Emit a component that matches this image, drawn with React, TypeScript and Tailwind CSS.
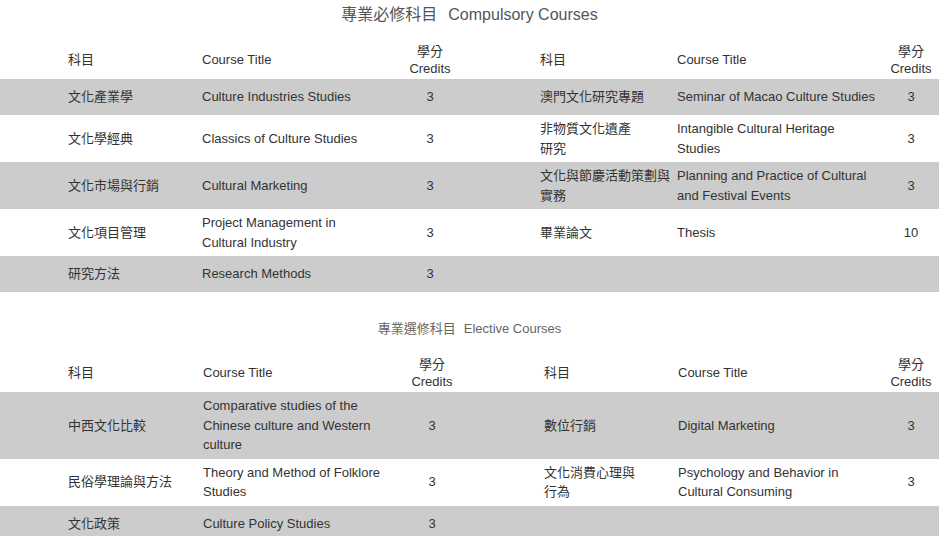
type Course = {
  zh: string[];
  en: string[];
  credits: string;
};

type Row = [Course, Course | null];

const compulsory: Row[] = [
  [
    { zh: ["文化產業學"], en: ["Culture Industries Studies"], credits: "3" },
    { zh: ["澳門文化研究專題"], en: ["Seminar of Macao Culture Studies"], credits: "3" },
  ],
  [
    { zh: ["文化學經典"], en: ["Classics of Culture Studies"], credits: "3" },
    {
      zh: ["非物質文化遺產", "研究"],
      en: ["Intangible Cultural Heritage", "Studies"],
      credits: "3",
    },
  ],
  [
    { zh: ["文化市場與行銷"], en: ["Cultural Marketing"], credits: "3" },
    {
      zh: ["文化與節慶活動策劃與", "實務"],
      en: ["Planning and Practice of Cultural", "and Festival Events"],
      credits: "3",
    },
  ],
  [
    {
      zh: ["文化項目管理"],
      en: ["Project Management in", "Cultural Industry"],
      credits: "3",
    },
    { zh: ["畢業論文"], en: ["Thesis"], credits: "10" },
  ],
  [{ zh: ["研究方法"], en: ["Research Methods"], credits: "3" }, null],
];

const elective: Row[] = [
  [
    {
      zh: ["中西文化比較"],
      en: ["Comparative studies of the", "Chinese culture and Western", "culture"],
      credits: "3",
    },
    { zh: ["數位行銷"], en: ["Digital Marketing"], credits: "3" },
  ],
  [
    {
      zh: ["民俗學理論與方法"],
      en: ["Theory and Method of Folklore", "Studies"],
      credits: "3",
    },
    {
      zh: ["文化消費心理與", "行為"],
      en: ["Psychology and Behavior in", "Cultural Consuming"],
      credits: "3",
    },
  ],
  [{ zh: ["文化政策"], en: ["Culture Policy Studies"], credits: "3" }, null],
];

const Lines = ({ lines }: { lines: string[] }) => (
  <div>
    {lines.map((l, i) => (
      <div key={i}>{l}</div>
    ))}
  </div>
);

const CourseTable = ({
  rows,
  cols,
}: {
  rows: Row[];
  cols: string;
}) => {
  const cell = "flex items-center";
  const num = "flex items-center justify-center";
  return (
    <div>
      <div className={`grid h-[39px] pl-[68px] leading-[17px] ${cols}`}>
        <div className={cell}>科目</div>
        <div className={cell}>Course Title</div>
        <div className={`${num} flex-col`}>
          <span>學分</span>
          <span>Credits</span>
        </div>
        <div />
        <div className={cell}>科目</div>
        <div className={cell}>Course Title</div>
        <div className={`${num} flex-col`}>
          <span>學分</span>
          <span>Credits</span>
        </div>
      </div>
      {rows.map(([left, right], i) => (
        <div
          key={i}
          className={`grid min-h-[36px] py-[4px] pl-[68px] leading-[19.5px] ${cols} ${
            i % 2 === 0 ? "bg-[#cccccc]" : "bg-white"
          }`}
        >
          <div className={cell}>
            <Lines lines={left.zh} />
          </div>
          <div className={cell}>
            <Lines lines={left.en} />
          </div>
          <div className={num}>{left.credits}</div>
          <div />
          <div className={cell}>{right && <Lines lines={right.zh} />}</div>
          <div className={cell}>{right && <Lines lines={right.en} />}</div>
          <div className={num}>{right?.credits}</div>
        </div>
      ))}
    </div>
  );
};

export default function App() {
  return (
    <div
      className="min-h-screen w-full overflow-hidden bg-white text-[13px] text-[#333333]"
      style={{ fontFamily: '"Liberation Sans", "Noto Sans CJK TC", sans-serif' }}
    >
      <div className="mb-[10px] flex h-[30px] items-center justify-center gap-[11px] text-[16px] text-[#555555]">
        <span>專業必修科目</span>
        <span>Compulsory Courses</span>
      </div>
      <CourseTable
        rows={compulsory}
        cols="grid-cols-[134px_198px_60px_80px_137px_206px_56px]"
      />

      <div className="mt-[22px] mb-[9px] flex h-[30px] items-center justify-center gap-[8px] text-[13px] text-[#666666]">
        <span>專業選修科目</span>
        <span>Elective Courses</span>
      </div>
      <CourseTable
        rows={elective}
        cols="grid-cols-[135px_199px_60px_82px_134px_205px_56px]"
      />
    </div>
  );
}
